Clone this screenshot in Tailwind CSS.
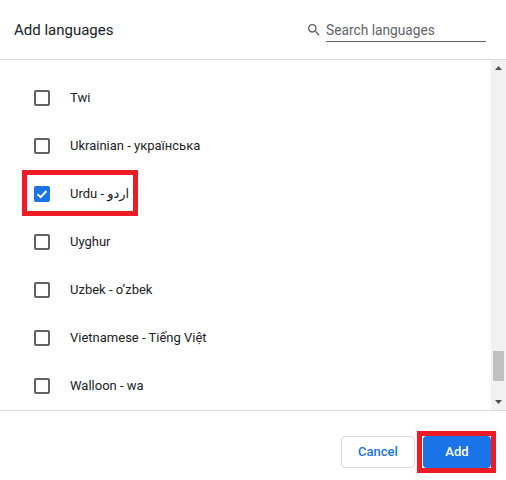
<!DOCTYPE html>
<html>
<head>
<meta charset="utf-8">
<script src="https://cdn.jsdelivr.net/npm/@tailwindcss/browser@4"></script>
</head>
<body class="bg-white overflow-hidden">
<div class="relative w-[506px] h-[480px] flex flex-col bg-white font-['Roboto','Noto_Sans',sans-serif] text-[#202124]">
  <header class="h-[60px] shrink-0 flex items-center justify-between pl-[14px] pr-[20px] border-b border-[#dadce0]">
    <h1 class="text-[15px] mt-[1px]">Add languages</h1>
    <div class="flex items-center gap-[4px]">
      <svg class="w-[16px] h-[16px] text-[#5f6368]" viewBox="0 0 24 24" fill="currentColor"><path d="M15.5 14h-.79l-.28-.27A6.47 6.47 0 0 0 16 9.5 6.5 6.5 0 1 0 9.5 16c1.61 0 3.09-.59 4.23-1.57l.27.28v.79l5 4.99L20.49 19l-4.99-5zm-6 0C7.01 14 5 11.99 5 9.5S7.01 5 9.5 5 14 7.01 14 9.5 11.99 14 9.5 14z"/></svg>
      <div class="w-[160px] h-[24px] leading-[24px] text-[13.75px] text-[#5f6368] border-b border-[#5f6368]">Search languages</div>
    </div>
  </header>
  <main class="h-[351px] shrink-0 flex overflow-hidden border-b border-[#dadce0]">
    <ul class="flex-1 pt-[14px] text-[13px]">
      <li class="h-[48px] flex items-center gap-[20px] pl-[34px]"><span class="w-[16px] h-[16px] rounded-[2px] border-2 border-[#5f6368]"></span>Twi</li>
      <li class="h-[48px] flex items-center gap-[20px] pl-[34px]"><span class="w-[16px] h-[16px] rounded-[2px] border-2 border-[#5f6368]"></span>Ukrainian - українська</li>
      <li class="h-[48px] flex items-center gap-[20px] pl-[34px]">
        <span class="w-[16px] h-[16px] rounded-[2px] bg-[#1a73e8] flex items-center justify-center">
          <svg class="w-[12px] h-[12px]" viewBox="0 0 12 12" fill="none" stroke="white" stroke-width="2"><path d="M1.5 6.2 4.6 9.2 10.5 3"/></svg>
        </span>
        <span>Urdu - <span dir="rtl" class="font-['Noto_Sans','DejaVu_Sans',sans-serif]">اردو</span></span>
      </li>
      <li class="h-[48px] flex items-center gap-[20px] pl-[34px]"><span class="w-[16px] h-[16px] rounded-[2px] border-2 border-[#5f6368]"></span>Uyghur</li>
      <li class="h-[48px] flex items-center gap-[20px] pl-[34px]"><span class="w-[16px] h-[16px] rounded-[2px] border-2 border-[#5f6368]"></span>Uzbek - o’zbek</li>
      <li class="h-[48px] flex items-center gap-[20px] pl-[34px]"><span class="w-[16px] h-[16px] rounded-[2px] border-2 border-[#5f6368]"></span>Vietnamese - Tiếng Việt</li>
      <li class="h-[48px] flex items-center gap-[20px] pl-[34px]"><span class="w-[16px] h-[16px] rounded-[2px] border-2 border-[#5f6368]"></span>Walloon - wa</li>
    </ul>
    <div class="relative w-[15px] h-full bg-[#f1f1f1]">
      <svg class="absolute left-[4px] top-[6px] w-[7px] h-[4px]" viewBox="0 0 7 4" fill="#505050"><path d="M3.5 0 7 4H0z"/></svg>
      <div class="absolute left-[2px] top-[291px] w-[11px] h-[30px] bg-[#c1c1c1]"></div>
      <svg class="absolute left-[4px] bottom-[6px] w-[7px] h-[4px]" viewBox="0 0 7 4" fill="#505050"><path d="M0 0h7L3.5 4z"/></svg>
    </div>
  </main>
  <footer class="flex-1 flex items-start justify-end gap-[8px] pt-[25px] pr-[15px]">
    <button class="w-[74px] h-[32px] rounded-[4px] border border-[#dadce0] bg-white text-[#1a73e8] text-[13px] font-medium">Cancel</button>
    <button class="w-[68px] h-[32px] rounded-[4px] bg-[#1a73e8] text-white text-[13px] font-medium">Add</button>
  </footer>
  <div class="absolute left-[22px] top-[170px] w-[116px] h-[46px] border-[5px] border-[#ed1c24]"></div>
  <div class="absolute left-[417px] top-[431px] w-[79px] h-[42px] border-[5px] border-[#ed1c24]"></div>
</div>
</body>
</html>
